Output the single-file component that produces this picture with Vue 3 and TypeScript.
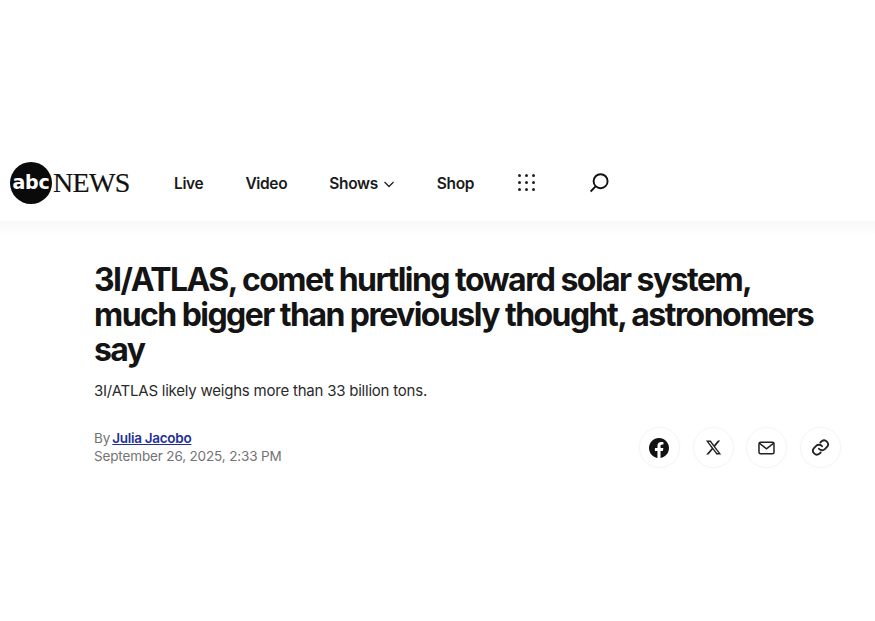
<template>
  <div class="page">
    <header class="site-header">
      <a class="logo" href="#">
        <span class="logo__disc">abc</span>
        <span class="logo__news">NEWS</span>
      </a>
      <nav class="nav">
        <a class="nav__item" href="#">Live</a>
        <a class="nav__item" href="#">Video</a>
        <a class="nav__item" href="#">
          Shows
          <svg class="nav__chevron" width="12" height="12" viewBox="0 0 12 12" fill="none" stroke="#222" stroke-width="1.3">
            <path d="M1.5 4l4.5 4.5L10.500 4" />
          </svg>
        </a>
        <a class="nav__item" href="#">Shop</a>
      </nav>
      <div class="dots" aria-hidden="true">
        <span v-for="n in 9" :key="n" class="dots__dot"></span>
      </div>
      <svg class="search" width="22" height="22" viewBox="0 0 22 22" fill="none" stroke="#111" stroke-width="1.9">
        <circle cx="12.600" cy="9.200" r="7" />
        <path d="M7.600 14.300L2.600 19.500" />
      </svg>
    </header>
    <div class="header-shade"></div>

    <main class="article">
      <h1 class="article__title">3I/ATLAS, comet hurtling toward solar system, much bigger than previously thought, astronomers say</h1>
      <p class="article__lede">3I/ATLAS likely weighs more than 33 billion tons.</p>
      <div class="meta">
        <div class="meta__text">
          <div class="meta__byline">By <a class="meta__author" href="#">Julia Jacobo</a></div>
          <div>September 26, 2025, 2:33 PM</div>
        </div>
        <div class="share">
          <button v-for="item in shareItems" :key="item.name" type="button" class="share__btn" :aria-label="item.name">
            <svg v-if="item.name === 'Facebook'" width="20" height="20" viewBox="0 0 24 24" fill="#111">
              <path d="M24 12.070C24 5.400 18.630 0 12 0S0 5.400 0 12.070c0 6.030 4.390 11.020 10.130 11.930v-8.440H7.080v-3.490h3.050V9.410c0-3.020 1.790-4.690 4.530-4.690 1.310 0 2.680.24 2.680.24v2.970h-1.510c-1.490 0-1.960.93-1.960 1.880v2.260h3.330l-.53 3.490h-2.800V24C19.610 23.090 24 18.100 24 12.070z" />
            </svg>
            <svg v-else-if="item.name === 'X'" width="17" height="17" viewBox="0 0 24 24" fill="#222">
              <path d="M18.240 2.250h3.310l-7.230 8.260 8.500 11.240H16.170l-5.210-6.820-5.970 6.820H1.680l7.730-8.840L1.250 2.250h6.830l4.710 6.230 5.450-6.230zm-1.160 17.520h1.830L7.080 4.130H5.120l11.960 15.640z" />
            </svg>
            <svg v-else-if="item.name === 'Email'" width="17" height="14" viewBox="0 0 17 14" fill="none" stroke="#222" stroke-width="1.500">
              <rect x="1" y="1.200" width="15" height="11.600" rx="1.500" />
              <path d="M1.300 2.200l7.200 5.600 7.200-5.600" />
            </svg>
            <svg v-else width="19" height="19" viewBox="0 0 24 24" fill="none" stroke="#222" stroke-width="2.300" stroke-linecap="round">
              <path d="M10 13.500a5 5 0 0 0 7.500.5l3-3a5 5 0 0 0-7-7l-1.700 1.700" />
              <path d="M14 10.500a5 5 0 0 0-7.500-.5l-3 3a5 5 0 0 0 7 7l1.700-1.700" />
            </svg>
          </button>
        </div>
      </div>
    </main>
  </div>
</template>

<script setup lang="ts">
const shareItems = [{ name: 'Facebook' }, { name: 'X' }, { name: 'Email' }, { name: 'Link' }]
</script>

<style>
html,
body {
  background: #fff;
}
</style>

<style scoped>
.page {
  height: 621px;
  overflow: hidden;
  padding-top: 161px;
  box-sizing: border-box;
  font-family: Inter, 'Liberation Sans', sans-serif;
  color: #111;
}

.site-header {
  display: flex;
  align-items: center;
  height: 43px;
  padding-left: 10px;
}

.logo {
  display: flex;
  align-items: center;
  text-decoration: none;
  color: #111;
  width: 164px;
}

.logo__disc {
  display: flex;
  align-items: center;
  justify-content: center;
  width: 42px;
  height: 42px;
  border-radius: 50%;
  background: #0a0a0a;
  color: #fff;
  font-family: 'DejaVu Sans', sans-serif;
  font-size: 19px;
  font-weight: 700;
  letter-spacing: -0.300px;
  line-height: 1;
}

.logo__news {
  margin-left: 1px;
  font-family: 'Liberation Serif', serif;
  font-size: 28px;
  letter-spacing: -0.650px;
  line-height: 1;
  -webkit-text-stroke: 0.2px #111;
}

.nav {
  display: flex;
  align-items: center;
  gap: 42px;
  margin-top: 1px;
}

.nav__item {
  display: flex;
  align-items: center;
  gap: 5px;
  color: #1a1a1a;
  text-decoration: none;
  font-size: 15.500px;
  font-weight: 600;
  letter-spacing: -0.350px;
}

.nav__chevron {
  margin-top: 1px;
}

.dots {
  display: grid;
  grid-template-columns: repeat(3, 3px);
  gap: 4px;
  margin-left: 44px;
}

.dots__dot {
  width: 3px;
  height: 3px;
  border-radius: 50%;
  background: #222;
}

.search {
  margin-left: 53px;
}

.header-shade {
  height: 15px;
  margin-top: 17px;
  background: linear-gradient(#f8f8f8, #fff);
}

.article {
  padding: 26px 34px 0 94px;
}

.article__title {
  max-width: 730px;
  margin: 0;
  font-size: 32px;
  line-height: 35px;
  font-weight: 750;
  letter-spacing: -1.550px;
  color: #141414;
}

.article__lede {
  margin: 12px 0 0;
  font-size: 15px;
  line-height: 24px;
  color: #2b2b2b;
  letter-spacing: -0.220px;
}

.meta {
  display: flex;
  align-items: center;
  justify-content: space-between;
  margin-top: 22px;
}

.meta__text {
  font-size: 13.500px;
  line-height: 18px;
  color: #737373;
  letter-spacing: -0.150px;
}

.meta__byline {
  word-spacing: -1.500px;
}

.meta__author {
  color: #1c2f96;
  font-weight: 600;
  letter-spacing: -0.300px;
  word-spacing: 0;
}

.share {
  display: flex;
  gap: 12.700px;
  margin-top: 2px;
}

.share__btn {
  display: flex;
  align-items: center;
  justify-content: center;
  width: 41px;
  height: 41px;
  padding: 0;
  border: 1px solid #f5f5f5;
  border-radius: 50%;
  background: #fff;
  box-shadow: 0 0 4px rgba(0, 0, 0, 0.02);
}
</style>
